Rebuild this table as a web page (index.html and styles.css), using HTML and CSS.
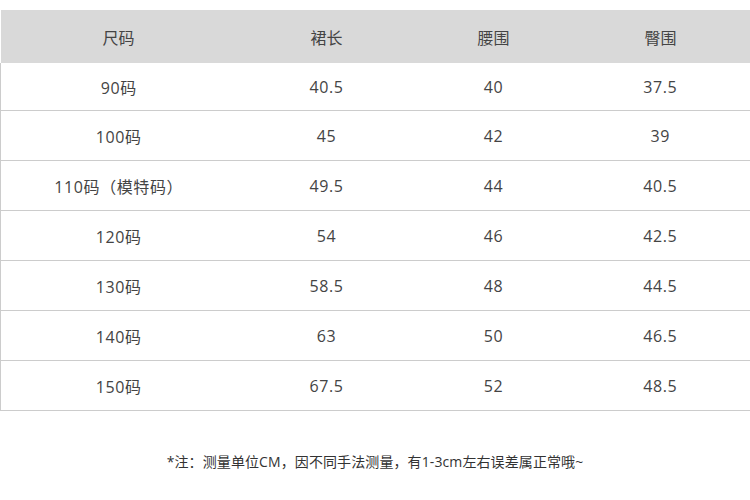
FILE: index.html
```html
<!DOCTYPE html>
<html lang="zh-CN">
<head>
<meta charset="utf-8">
<link rel="stylesheet" href="styles.css">
</head>
<body>
<div class="page">
  <table class="size-table">
    <colgroup>
      <col class="c1"><col class="c2"><col class="c3"><col class="c4">
    </colgroup>
    <thead>
      <tr><th>尺码</th><th>裙长</th><th>腰围</th><th>臀围</th></tr>
    </thead>
    <tbody>
      <tr><td>90码</td><td>40.5</td><td>40</td><td>37.5</td></tr>
      <tr><td>100码</td><td>45</td><td>42</td><td>39</td></tr>
      <tr><td>110码（模特码）</td><td>49.5</td><td>44</td><td>40.5</td></tr>
      <tr><td>120码</td><td>54</td><td>46</td><td>42.5</td></tr>
      <tr><td>130码</td><td>58.5</td><td>48</td><td>44.5</td></tr>
      <tr><td>140码</td><td>63</td><td>50</td><td>46.5</td></tr>
      <tr><td>150码</td><td>67.5</td><td>52</td><td>48.5</td></tr>
    </tbody>
  </table>
  <p class="note">*注：测量单位CM，因不同手法测量，有1-3cm左右误差属正常哦~</p>
</div>
</body>
</html>
```
FILE: styles.css
```css
html, body {
  margin: 0;
  padding: 0;
  background: #ffffff;
}
body {
  font-family: "Open Sans", "Noto Sans CJK SC", sans-serif;
  color: #444444;
}
.page {
  width: 750px;
  padding-top: 10px;
}
.size-table {
  width: 750px;
  border-collapse: collapse;
  table-layout: fixed;
}
.c1 { width: 236px; }
.c2 { width: 180px; }
.c3 { width: 154px; }
.c4 { width: 180px; }
.size-table th {
  height: 53px;
  padding: 0;
  background: #d9d9d9;
  font-weight: normal;
  font-size: 16px;
  color: #444444;
  text-align: center;
  vertical-align: middle;
}
.size-table td {
  height: 49px;
  padding: 0;
  font-size: 16px;
  letter-spacing: 0.6px;
  text-align: center;
  vertical-align: middle;
  border-bottom: 1px solid #cccccc;
}
.size-table tbody tr:first-child td {
  height: 47px;
}
.size-table td:first-child {
  border-left: 1px solid #cccccc;
}
.size-table td:last-child {
  border-right: 1px solid #cccccc;
}
.note {
  margin: 40px 0 0;
  text-align: center;
  font-size: 14px;
  letter-spacing: 0.1px;
  color: #333333;
}
```
